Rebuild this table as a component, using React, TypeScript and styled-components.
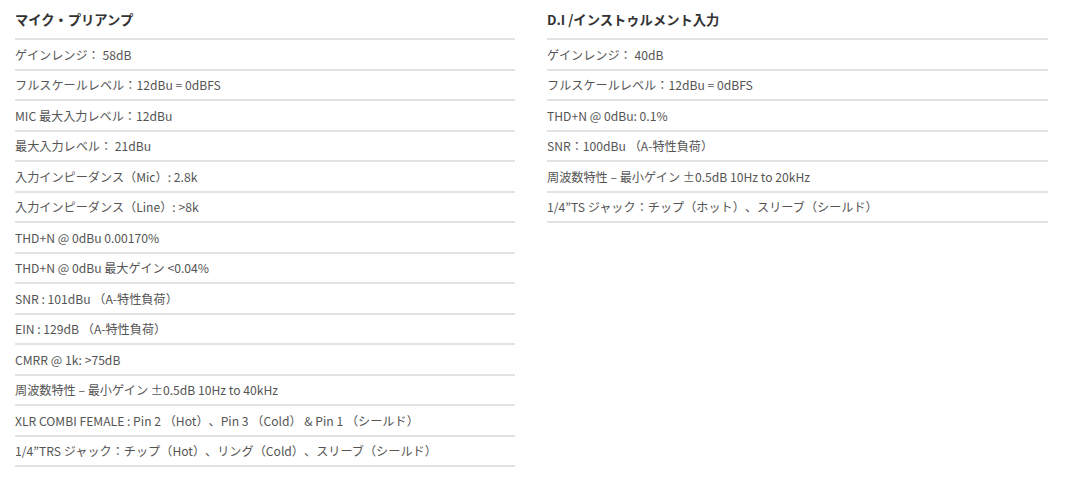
import styled, { createGlobalStyle } from "styled-components";

const GlobalStyle = createGlobalStyle`
  html, body {
    margin: 0;
    padding: 0;
    background: #fff;
  }
  body {
    font-family: "Noto Sans CJK JP", "Noto Sans", sans-serif;
    color: #555;
    text-spacing-trim: space-all;
  }
`;

const Wrapper = styled.div`
  display: grid;
  grid-template-columns: 500px 501px;
  column-gap: 32px;
  padding: 0 15px;
`;

const Section = styled.section`
  display: flex;
  flex-direction: column;
`;

const Heading = styled.h3`
  margin: 0;
  height: 38px;
  display: flex;
  align-items: center;
  font-size: 13.3px;
  font-weight: 700;
  color: #333;
`;

const SpecList = styled.ul`
  list-style: none;
  margin: 0;
  padding: 0;
  border-bottom: 2px solid #e2e2e2;
`;

const SpecItem = styled.li`
  border-top: 2px solid #e2e2e2;
  height: 28.5px;
  display: flex;
  align-items: center;
  font-size: 12.15px;
  color: #555;
  white-space: pre;
`;

const micPre = [
  "ゲインレンジ： 58dB",
  "フルスケールレベル：12dBu = 0dBFS",
  "MIC 最大入力レベル：12dBu",
  "最大入力レベル： 21dBu",
  "入力インピーダンス（Mic）: 2.8k",
  "入力インピーダンス（Line）: >8k",
  "THD+N @ 0dBu 0.00170%",
  "THD+N @ 0dBu 最大ゲイン <0.04%",
  "SNR : 101dBu （A-特性負荷）",
  "EIN : 129dB （A-特性負荷）",
  "CMRR @ 1k: >75dB",
  "周波数特性 – 最小ゲイン ±0.5dB 10Hz to 40kHz",
  "XLR COMBI FEMALE : Pin 2 （Hot）、Pin 3 （Cold） & Pin 1 （シールド）",
  "1/4”TRS ジャック：チップ（Hot）、リング（Cold）、スリーブ（シールド）",
];

const diInput = [
  "ゲインレンジ： 40dB",
  "フルスケールレベル：12dBu = 0dBFS",
  "THD+N @ 0dBu: 0.1%",
  "SNR：100dBu （A-特性負荷）",
  "周波数特性 – 最小ゲイン ±0.5dB 10Hz to 20kHz",
  "1/4”TS ジャック：チップ（ホット）、スリーブ（シールド）",
];

function SpecTable({ title, items }: { title: string; items: string[] }) {
  return (
    <Section>
      <Heading>{title}</Heading>
      <SpecList>
        {items.map((item) => (
          <SpecItem key={item}>{item}</SpecItem>
        ))}
      </SpecList>
    </Section>
  );
}

export default function App() {
  return (
    <>
      <GlobalStyle />
      <Wrapper>
        <SpecTable title="マイク・プリアンプ" items={micPre} />
        <SpecTable title="D.I /インストゥルメント入力" items={diInput} />
      </Wrapper>
    </>
  );
}
